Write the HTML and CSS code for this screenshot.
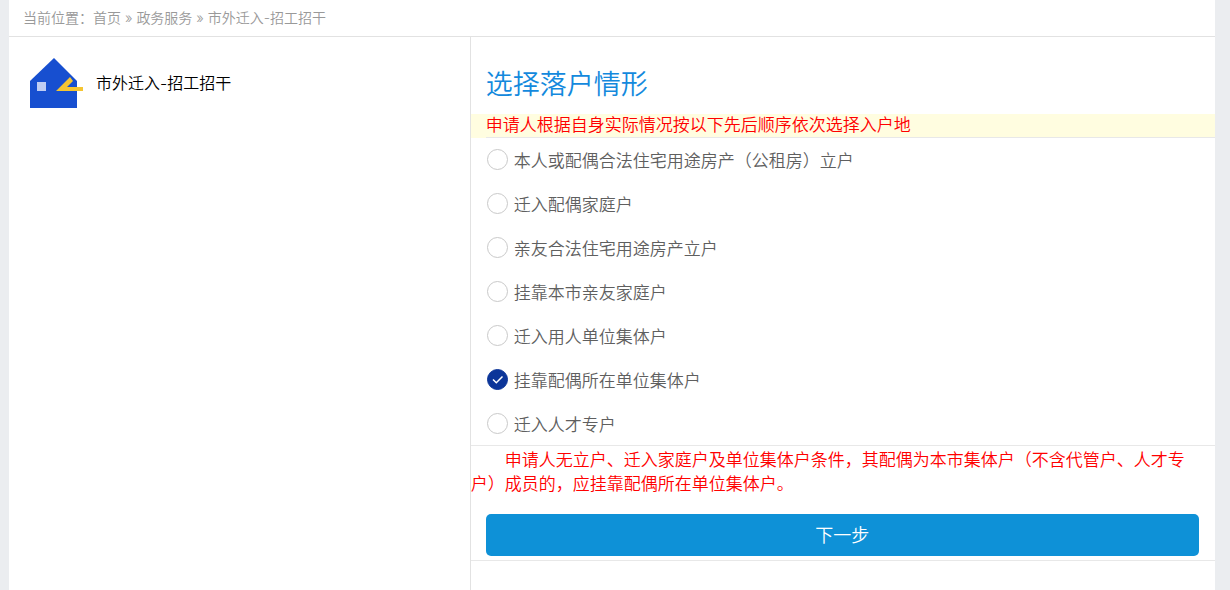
FILE: index.html
```html
<!DOCTYPE html>
<html lang="zh-CN">
<head>
<meta charset="utf-8">
<meta name="viewport" content="width=device-width, initial-scale=1">
<title>市外迁入-招工招干</title>
<link rel="stylesheet" href="styles.css">
</head>
<body>
<div class="page">
  <nav class="crumbs" aria-label="当前位置">当前位置：<a href="#home">首页</a> » <a href="#services">政务服务</a> » <a href="#item">市外迁入-招工招干</a></nav>
  <div class="columns">
    <aside class="side">
      <svg class="house" viewBox="0 0 54 52" aria-hidden="true">
        <path fill="#174fd0" d="M0 24 24 1 47 24V51H0Z"/>
        <path fill="#bfcdf3" d="M7 25h9v9H7Z"/>
        <path fill="#f5c531" d="M26 34 40 20l3 4-6 6h16v4Z"/>
      </svg>
      <span class="side-title">市外迁入-招工招干</span>
    </aside>
    <main class="main">
      <form action="#next">
        <h1 class="heading">选择落户情形</h1>
        <div class="notice"><p class="notice-text">申请人根据自身实际情况按以下先后顺序依次选择入户地</p></div>
        <div class="options">
          <label class="option"><input class="radio" type="radio" name="kind"><span>本人或配偶合法住宅用途房产（公租房）立户</span></label>
          <label class="option"><input class="radio" type="radio" name="kind"><span>迁入配偶家庭户</span></label>
          <label class="option"><input class="radio" type="radio" name="kind"><span>亲友合法住宅用途房产立户</span></label>
          <label class="option"><input class="radio" type="radio" name="kind"><span>挂靠本市亲友家庭户</span></label>
          <label class="option"><input class="radio" type="radio" name="kind"><span>迁入用人单位集体户</span></label>
          <label class="option"><input class="radio" type="radio" name="kind" checked><span>挂靠配偶所在单位集体户</span></label>
          <label class="option"><input class="radio" type="radio" name="kind"><span>迁入人才专户</span></label>
        </div>
        <p class="hint">申请人无立户、迁入家庭户及单位集体户条件，其配偶为本市集体户（不含代管户、人才专户）成员的，应挂靠配偶所在单位集体户。</p>
        <div class="actions"><button class="next" type="submit">下一步</button></div>
      </form>
    </main>
  </div>
</div>
</body>
</html>
```

FILE: styles.css
```css
* {
  box-sizing: border-box;
}

body {
  margin: 0;
  background: #ebedf0;
  color: #000;
  font-family: Inter, "Noto Sans CJK SC", sans-serif;
  font-weight: 350;
}

.page {
  display: flex;
  flex-direction: column;
  min-height: 100vh;
  margin: 0 15px 0 9px;
  background: #fff;
}

.crumbs {
  padding: 6px 14px;
  border-bottom: 1px solid #e2e2e2;
  color: #999;
  font-size: 14px;
  line-height: 24px;
}

.crumbs a {
  color: inherit;
  text-decoration: none;
}

.columns {
  display: flex;
  flex: 1;
}

.side {
  display: flex;
  flex: 0 0 38.2%;
  align-items: flex-start;
  gap: 12px;
  padding: 20px 21px;
}

.house {
  width: 54px;
  height: 52px;
}

.side-title {
  padding-top: 14px;
  font-size: 16px;
  line-height: 24px;
}

.main {
  flex: 1;
  border-left: 1px solid #e2e2e2;
}

.heading {
  margin: 0;
  padding: 28px 15px 9px;
  color: #1389dd;
  font-size: 27px;
  font-weight: 350;
  line-height: 40px;
}

.notice {
  padding-left: 15px;
  background: #fffde0;
}

.notice-text {
  margin: 0;
  border-bottom: 1px solid #e8e8e8;
  color: #f00;
  font-size: 17px;
  line-height: 23px;
}

.options {
  margin-top: -1px;
  border-bottom: 1px solid #e8e8e8;
}

.option {
  display: flex;
  align-items: center;
  gap: 6px;
  height: 44px;
  padding: 0 16px;
  color: #5f5f5f;
  font-size: 17px;
}

.radio {
  appearance: none;
  width: 21px;
  height: 21px;
  margin: 0;
  border: 1px solid #c9c9c9;
  border-radius: 50%;
}

.radio:checked {
  border-color: #0c3599;
  background: #0c3599 url("data:image/svg+xml,%3Csvg xmlns='http://www.w3.org/2000/svg' viewBox='0 0 21 21'%3E%3Cpath d='M6 10.5 9.3 13.7 15.5 7.5' fill='none' stroke='white' stroke-width='1.5'/%3E%3C/svg%3E") center / 21px 21px no-repeat;
}

.hint {
  margin: 0;
  padding: 2px 16px 0 0;
  color: #f00;
  font-size: 17px;
  line-height: 24px;
  text-indent: 2em;
}

.actions {
  padding: 18px 16px 4px 15px;
  border-bottom: 1px solid #e8e8e8;
}

.next {
  display: block;
  width: 100%;
  height: 42px;
  padding: 0 0 2px;
  border: 0;
  border-radius: 5px;
  background: #0e91d7;
  color: #fff;
  font: inherit;
  font-size: 18px;
}
```
